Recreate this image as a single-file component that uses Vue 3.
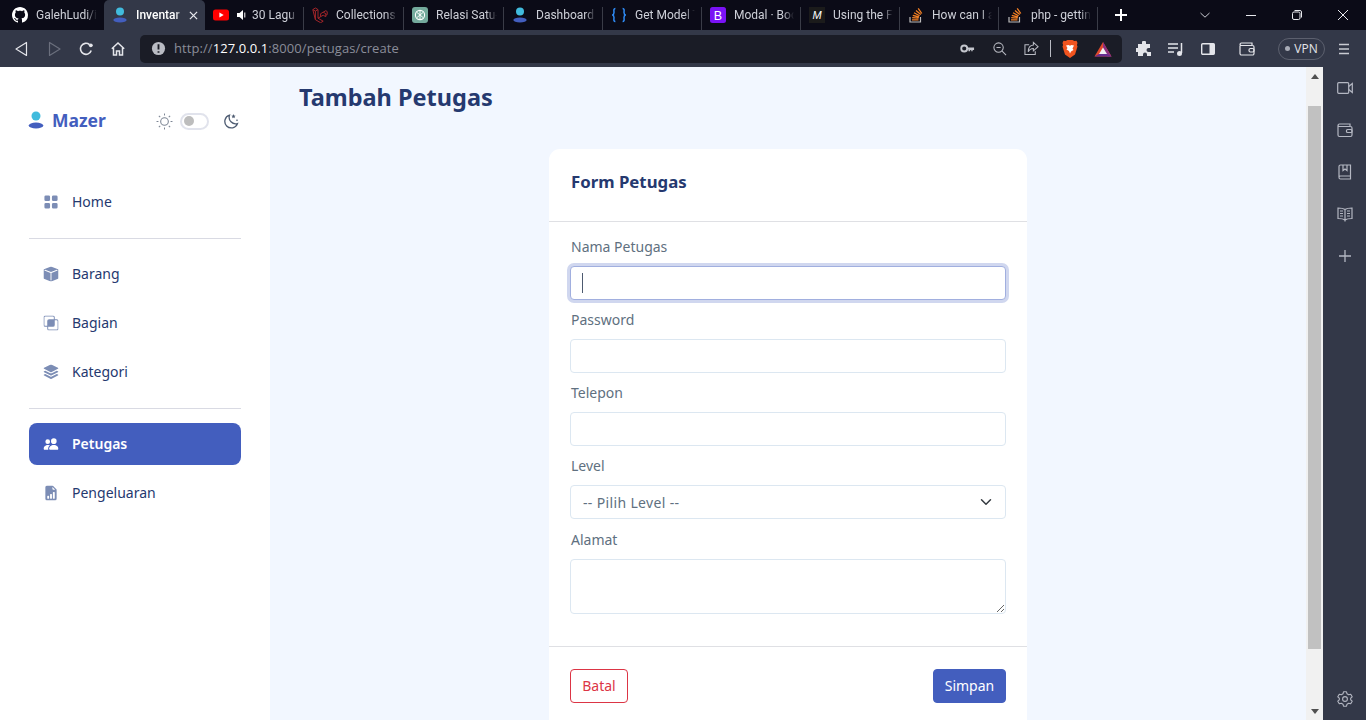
<script setup>
const tabs = [
  { t: 'GalehLudi/in', i: 'gh' },
  { t: 'Inventar', i: 'mazer', active: true },
  { t: '30 Lagu', i: 'yt', audio: true },
  { t: 'Collections -', i: 'lara' },
  { t: 'Relasi Satu-l', i: 'gpt' },
  { t: 'Dashboard -', i: 'mazer' },
  { t: 'Get Model T', i: 'json' },
  { t: 'Modal · Boo', i: 'bs' },
  { t: 'Using the Fe', i: 'mdn' },
  { t: 'How can I a', i: 'so' },
  { t: 'php - gettin', i: 'so' },
]
const menu = [
  [{ t: 'Home', d: ['M1 2.5A1.5 1.5 0 0 1 2.5 1h3A1.5 1.5 0 0 1 7 2.5v3A1.5 1.5 0 0 1 5.5 7h-3A1.5 1.5 0 0 1 1 5.5v-3zm8 0A1.5 1.5 0 0 1 10.5 1h3A1.5 1.5 0 0 1 15 2.5v3A1.5 1.5 0 0 1 13.5 7h-3A1.5 1.5 0 0 1 9 5.5v-3zm-8 8A1.5 1.5 0 0 1 2.5 9h3A1.5 1.5 0 0 1 7 10.5v3A1.5 1.5 0 0 1 5.5 15h-3A1.5 1.5 0 0 1 1 13.5v-3zm8 0A1.5 1.5 0 0 1 10.5 9h3a1.5 1.5 0 0 1 1.5 1.5v3a1.5 1.5 0 0 1-1.5 1.5h-3A1.5 1.5 0 0 1 9 13.5v-3z'] }],
  [
    { t: 'Barang', d: ['M15.528 2.973a.75.75 0 0 1 .472.696v8.662a.75.75 0 0 1-.472.696l-7.25 2.9a.75.75 0 0 1-.557 0l-7.25-2.9A.75.75 0 0 1 0 12.331V3.669a.75.75 0 0 1 .471-.696L7.443.184l.004-.001.274-.11a.75.75 0 0 1 .558 0l.274.11.004.001 6.971 2.789Zm-1.374.527L8 5.962 1.846 3.5 1 3.839v.4l6.5 2.6v7.922l.5.2.5-.2V6.84l6.5-2.6v-.4l-.846-.339Z'] },
    { t: 'Bagian', d: ['M0 2a2 2 0 0 1 2-2h8a2 2 0 0 1 2 2v2h2a2 2 0 0 1 2 2v8a2 2 0 0 1-2 2H6a2 2 0 0 1-2-2v-2H2a2 2 0 0 1-2-2V2zm5 10v2a1 1 0 0 0 1 1h8a1 1 0 0 0 1-1V6a1 1 0 0 0-1-1h-2v5a2 2 0 0 1-2 2H5zm6-8V2a1 1 0 0 0-1-1H2a1 1 0 0 0-1 1v8a1 1 0 0 0 1 1h2V6a2 2 0 0 1 2-2h5z'] },
    { t: 'Kategori', d: ['m14.12 10.163 1.715.858c.22.11.22.424 0 .534L8.267 15.34a.598.598 0 0 1-.534 0L.165 11.555a.299.299 0 0 1 0-.534l1.716-.858 5.317 2.659c.505.252 1.1.252 1.604 0l5.317-2.66zM7.733.063a.598.598 0 0 1 .534 0l7.568 3.784a.3.3 0 0 1 0 .535L8.267 8.165a.598.598 0 0 1-.534 0L.165 4.382a.299.299 0 0 1 0-.535L7.733.063z', 'm14.12 6.576 1.715.858c.22.11.22.424 0 .534l-7.568 3.784a.598.598 0 0 1-.534 0L.165 7.968a.299.299 0 0 1 0-.534l1.716-.858 5.317 2.659c.505.252 1.1.252 1.604 0l5.317-2.659z'] },
  ],
  [
    { t: 'Petugas', active: true, d: ['M7 14s-1 0-1-1 1-4 5-4 5 3 5 4-1 1-1 1H7Zm4-6a3 3 0 1 0 0-6 3 3 0 0 0 0 6Zm-5.784 6A2.238 2.238 0 0 1 5 13c0-1.355.68-2.75 1.936-3.72A6.325 6.325 0 0 0 5 9c-4 0-5 3-5 4s1 1 1 1h4.216ZM4.5 8a2.5 2.5 0 1 0 0-5 2.5 2.5 0 0 0 0 5Z'] },
    { t: 'Pengeluaran', d: ['M9.293 0H4a2 2 0 0 0-2 2v12a2 2 0 0 0 2 2h8a2 2 0 0 0 2-2V4.707A1 1 0 0 0 13.707 4L10 .293A1 1 0 0 0 9.293 0zM9.5 3.5v-2l3 3h-2a1 1 0 0 1-1-1zm.5 10v-6a.5.5 0 0 1 .5-.5h1a.5.5 0 0 1 .5.5v6a.5.5 0 0 1-.5.5h-1a.5.5 0 0 1-.5-.5zm-2.5.5a.5.5 0 0 1-.5-.5v-4a.5.5 0 0 1 .5-.5h1a.5.5 0 0 1 .5.5v4a.5.5 0 0 1-.5.5h-1zm-3 0a.5.5 0 0 1-.5-.5v-2a.5.5 0 0 1 .5-.5h1a.5.5 0 0 1 .5.5v2a.5.5 0 0 1-.5.5h-1z'] },
  ],
]
const sun = [0, 45, 90, 135, 180, 225, 270, 315]
</script>

<template>
  <div class="browser">
    <div class="tabstrip">
      <div v-for="(tab, n) in tabs" :key="n" class="tab" :class="{ on: tab.active }">
        <svg class="fav" viewBox="0 0 16 16">
          <template v-if="tab.i === 'gh'">
            <path fill="#fff" d="M8 0C3.58 0 0 3.58 0 8c0 3.54 2.29 6.53 5.47 7.59.4.07.55-.17.55-.38 0-.19-.01-.82-.01-1.49-2.01.37-2.53-.49-2.69-.94-.09-.23-.48-.94-.82-1.13-.28-.15-.68-.52-.01-.53.63-.01 1.08.58 1.23.82.72 1.21 1.87.87 2.33.66.07-.52.28-.87.51-1.07-1.78-.2-3.64-.89-3.64-3.95 0-.87.31-1.59.82-2.15-.08-.2-.36-1.02.08-2.12 0 0 .67-.21 2.2.82.64-.18 1.32-.27 2-.27s1.36.09 2 .27c1.53-1.04 2.2-.82 2.2-.82.44 1.1.16 1.92.08 2.12.51.56.82 1.27.82 2.15 0 3.07-1.87 3.75-3.65 3.95.29.25.54.73.54 1.48 0 1.07-.01 1.93-.01 2.2 0 .21.15.46.55.38A8.01 8.01 0 0 0 16 8c0-4.42-3.58-8-8-8Z"/>
          </template>
          <template v-else-if="tab.i === 'mazer'">
            <circle cx="8" cy="4.5" r="4" fill="#41bbdd"/>
            <ellipse cx="8" cy="13" rx="6.6" ry="2.6" fill="#435ebe"/>
          </template>
          <template v-else-if="tab.i === 'yt'">
            <rect y="2.500" width="16" height="11" rx="2.500" fill="#f00"/>
            <path d="M6.400 5.500v5l4.300-2.500z" fill="#fff"/>
          </template>
          <template v-else-if="tab.i === 'lara'">
            <path fill="none" stroke="#a3262a" stroke-width="1" d="M.8 2.600 3.400 1 6 2.600v8.600l5.200 3-2.600 1.500-5.200-3zM6 11.200l5.200-3 2.600 1.500v-3l-2.600-1.500-2.600 1.500v3M11.200 5.200l2.600-1.500 1.400.9v3l-1.400.6M.8 2.600l2.600 1.500L6 2.600M3.400 4.100v8.600"/>
          </template>
          <template v-else-if="tab.i === 'gpt'">
            <rect width="16" height="16" rx="3" fill="#74aa9c"/>
            <circle cx="8" cy="8" r="4.600" fill="none" stroke="#fff" stroke-width="1.100"/>
            <path d="M5 5.500 11 10.500M11 5.500 5 10.500M8 3.400v9.200" stroke="#fff" stroke-width=".9"/>
          </template>
          <template v-else-if="tab.i === 'json'">
            <path fill="none" stroke="#2f8bf5" stroke-width="1.500" d="M4.400 1.500c-2.200 0-1.400 2.600-1.400 4 0 1.300-.5 2.200-1.700 2.500 1.200.3 1.700 1.200 1.700 2.500 0 1.400-.8 4 1.400 4M11.600 1.500c2.200 0 1.400 2.600 1.400 4 0 1.300.5 2.200 1.700 2.500-1.200.3-1.700 1.200-1.700 2.500 0 1.400.8 4-1.400 4"/>
          </template>
          <template v-else-if="tab.i === 'bs'">
            <rect width="16" height="16" rx="2.500" fill="#7a12f5"/>
            <text x="8" y="12.600" text-anchor="middle" font-size="12.500" font-weight="400" font-family="'Liberation Sans', sans-serif" fill="#fff">B</text>
          </template>
          <template v-else-if="tab.i === 'mdn'">
            <rect width="16" height="16" fill="#1b1b1b"/>
            <text x="8" y="12" text-anchor="middle" font-size="11" font-style="italic" font-weight="400" font-family="'Liberation Sans', sans-serif" fill="#fff">M</text>
          </template>
          <template v-else>
            <path d="M2 10v5h10.500v-5" fill="none" stroke="#bcbbbb" stroke-width="1.200"/>
            <path d="M4 12.800h6.500M4.200 10.600l6.400.6M4.800 8.300l6.200 1.700M6 5.800l5.600 3M8 3.500l4.800 4.100M10.200 1.300l3.600 5.200" stroke="#f48024" stroke-width="1.300" fill="none"/>
          </template>
        </svg>
        <svg v-if="tab.audio" class="speaker" viewBox="0 0 12 12">
          <path fill="#fff" d="M0 4h2.500L6 1v10L2.500 8H0z"/><path fill="none" stroke="#fff" d="M7.800 3.500v5"/>
        </svg>
        <span class="tab-title">{{ tab.t }}</span>
        <svg v-if="tab.active" class="tab-x" viewBox="0 0 10 10">
          <path d="M1 1l8 8M9 1l-8 8" stroke="#e8e9ee" stroke-width="1.400"/>
        </svg>
      </div>
      <svg class="new-tab" viewBox="0 0 12 12"><path d="M6 0v12M0 6h12" stroke="#fff" stroke-width="2"/></svg>
      <div class="win-controls">
        <svg viewBox="0 0 12 12"><path d="M1.500 4 6 8.200 10.500 4" fill="none" stroke="#c9cbd2"/></svg>
        <svg viewBox="0 0 12 12"><path d="M1 6.500h10" stroke="#e8e9ee"/></svg>
        <svg viewBox="0 0 12 12"><rect x="1.500" y="3" width="7.500" height="7.500" rx="1.500" fill="none" stroke="#e8e9ee"/><path d="M3.500 1.500h5.500a1.500 1.500 0 0 1 1.500 1.500v5.500" fill="none" stroke="#e8e9ee"/></svg>
        <svg viewBox="0 0 12 12"><path d="M1 1l10 10M11 1 1 11" stroke="#e8e9ee"/></svg>
      </div>
    </div>

    <div class="toolbar">
      <button class="tb"><svg viewBox="0 0 16 16"><path d="M12.500 1.500v13L2 8z" fill="none" stroke="#e4e5ea" stroke-width="1.200" stroke-linejoin="round"/></svg></button>
      <button class="tb"><svg viewBox="0 0 16 16"><path d="M3.500 1.500v13L14 8z" fill="none" stroke="#6b6f7d" stroke-width="1.200" stroke-linejoin="round"/></svg></button>
      <button class="tb"><svg viewBox="0 0 16 16"><path d="M13.200 9.500A5.500 5.500 0 1 1 11.500 3.600" fill="none" stroke="#e4e5ea" stroke-width="1.600"/><circle cx="12.800" cy="4.300" r="1.900" fill="#e4e5ea"/></svg></button>
      <button class="tb"><svg viewBox="0 0 16 16"><path d="M1.800 7.800 8 2l6.200 5.800M3.500 6.800V14h3v-4h3v4h3V6.800" fill="none" stroke="#e4e5ea" stroke-width="1.500"/></svg></button>
      <div class="urlbar">
        <svg class="info" viewBox="0 0 16 16"><circle cx="8" cy="8" r="7" fill="#b9bbc3"/><path d="M8 3.500v5.500M8 10.800v1.700" stroke="#1a1c26" stroke-width="2"/></svg>
        <span class="url">http://<b>127.0.0.1</b>:8000/petugas/create</span>
        <div class="url-actions">
          <svg viewBox="0 0 16 16"><circle cx="4.500" cy="8" r="3.200" fill="none" stroke="#c4c6cd" stroke-width="2"/><path d="M7.500 7h7.500v2.500h-1.500V11h-1.500V9.500h-1.200V11H9V9H7.500z" fill="#c4c6cd"/></svg>
          <svg viewBox="0 0 16 16"><circle cx="7" cy="7" r="5" fill="none" stroke="#b9bbc3" stroke-width="1.100"/><path d="M4.800 7h4.400M10.800 10.800 15 15" stroke="#b9bbc3" stroke-width="1.100"/></svg>
          <svg viewBox="0 0 16 16"><path d="M5.500 4H1v10.500h11V11" fill="none" stroke="#b9bbc3" stroke-width="1.100"/><path d="M10 1.500 15 6l-5 4.500V8C7 8 5.500 9.500 4.500 11.500 4.500 7.500 6.500 4.500 10 4.200z" fill="none" stroke="#b9bbc3" stroke-width="1.100"/></svg>
          <i class="url-div"></i>
          <svg class="brave" viewBox="0 0 16 18"><path d="M3.600 1 5.500 0h5l1.900 1 2.100-.2 1 2.100-.6 2.100.6 1.500-2.500 8L8 18l-5-3.500-2.500-8 .6-1.500L.5 2.900l1-2.100z" fill="#f1541f"/><path d="M4 5.500 6.500 5 8 5.800 9.500 5l2.500.5-1.500 3 1 1.500-2.500 1.500L8 13.500l-1-2.500L4.500 9.500l1-1.500z" fill="#fff"/></svg>
          <svg class="bat" viewBox="0 0 18 16"><path d="M9 1 17.500 15.500H.5z" fill="#e0492c"/><path d="M9 1 17.500 15.500H13L9 7z" fill="#8a2f7e"/><path d="M9 6.500 13 13H5z" fill="#f1f0f5"/><path d="M.5 15.500 5 13H13L17.500 15.500z" fill="#662d91"/></svg>
        </div>
      </div>
      <div class="tool-right">
        <svg class="r1" viewBox="0 0 16 16"><path fill="#e4e5ea" d="M6 1.500a2 2 0 0 1 4 0V3h4v4h-1.500a2 2 0 0 0 0 4H15v4h-4v-1.500a2 2 0 0 0-4 0V15H2v-4H.8a2 2 0 0 1 0-4H2V3h4z"/></svg>
        <svg class="r2" viewBox="0 0 16 16"><path d="M0 3h10M0 7h10M0 11h6" stroke="#e4e5ea" stroke-width="1.400"/><path d="M13.500 2v10" stroke="#e4e5ea" stroke-width="1.500"/><circle cx="11.500" cy="12.500" r="2.500" fill="#e4e5ea"/></svg>
        <svg class="r3" viewBox="0 0 16 16"><rect x="1.700" y="2.700" width="12.600" height="10.600" rx="1" fill="none" stroke="#e4e5ea" stroke-width="1.400"/><path d="M9.500 2.700h4.800v10.600H9.500z" fill="#e4e5ea"/></svg>
        <svg class="r4" viewBox="0 0 16 16"><path d="M1 4.500V12.500a1.500 1.500 0 0 0 1.500 1.500h11a1.500 1.500 0 0 0 1.500-1.500V6a1.500 1.500 0 0 0-1.500-1.500H2.500A1.500 1.500 0 0 1 1 3.500 1.500 1.500 0 0 1 2.500 2H13v2.500" fill="none" stroke="#e4e5ea" stroke-width="1.200"/><rect x="10" y="7.500" width="5" height="3.500" rx="1.500" fill="none" stroke="#e4e5ea" stroke-width="1.200"/></svg>
        <div class="vpn"><i></i>VPN</div>
        <svg class="r5" viewBox="0 0 12 12"><path d="M1 1.500h10M1 6h10M1 10.500h10" stroke="#c9cbd2" stroke-width="1.500"/></svg>
      </div>
    </div>

    <div class="viewport">
      <aside class="sidebar">
        <div class="brand-row">
          <div class="brand">
            <svg viewBox="0 0 16 18"><circle cx="8" cy="5" r="4.500" fill="#41bbdd"/><ellipse cx="8" cy="14.500" rx="7.300" ry="3" fill="#435ebe"/></svg>
            <span>Mazer</span>
          </div>
          <div class="theme">
            <svg class="sun" viewBox="0 0 16 16">
              <circle cx="8" cy="8" r="3.600" fill="none" stroke="#7c8594" stroke-width="1"/>
              <path v-for="a in sun" :key="a" d="M8 .5v1.800" stroke="#7c8594" stroke-width="1" :transform="`rotate(${a} 8 8)`"/>
            </svg>
            <div class="switch"><i></i></div>
            <svg class="moon" viewBox="0 0 16 16">
              <path d="M6.500 2.200A6.500 6.500 0 1 0 14.500 10.500 6.500 6.500 0 0 1 6.500 2.200z" fill="none" stroke="#4f5d73" stroke-width="1.300"/>
              <path d="M10.500 1l.6 1.500 1.500.2-1.100 1 .3 1.500-1.300-.8-1.300.8.3-1.500-1.100-1 1.500-.2zM14 6l.3.800.8.1-.6.500.2.800-.7-.4-.7.4.2-.8-.6-.5.8-.1z" fill="#4f5d73"/>
            </svg>
          </div>
        </div>
        <nav class="menu">
          <template v-for="(group, g) in menu" :key="g">
            <hr v-if="g > 0" class="rule" />
            <ul>
              <li v-for="item in group" :key="item.t" class="item" :class="{ on: item.active }">
                <svg viewBox="0 0 16 16"><path v-for="(p, k) in item.d" :key="k" :d="p"/></svg>
                <span>{{ item.t }}</span>
              </li>
            </ul>
          </template>
        </nav>
      </aside>

      <main class="main">
        <h1>Tambah Petugas</h1>
        <section class="card">
          <header class="card-head"><h2>Form Petugas</h2></header>
          <form class="card-body">
            <label>Nama Petugas</label>
            <div class="field focus-wrap">
              <input class="ctl focused" type="text" />
              <i class="caret"></i>
            </div>
            <label>Password</label>
            <div class="field"><input class="ctl" type="password" /></div>
            <label>Telepon</label>
            <div class="field"><input class="ctl" type="text" /></div>
            <label>Level</label>
            <div class="field select-wrap">
              <select class="ctl select"><option>-- Pilih Level --</option></select>
              <svg class="chev" viewBox="0 0 16 16"><path d="M2 5l6 6 6-6" fill="none" stroke="#343a40" stroke-width="2" stroke-linecap="round" stroke-linejoin="round"/></svg>
            </div>
            <label class="l-last">Alamat</label>
            <div class="field"><textarea class="ctl area"></textarea></div>
          </form>
          <footer class="card-foot">
            <button class="btn outline" type="button">Batal</button>
            <button class="btn solid" type="button">Simpan</button>
          </footer>
        </section>
      </main>

      <div class="scrollbar">
        <i class="arrow up"></i>
        <div class="track"><div class="thumb"></div></div>
        <i class="arrow down"></i>
      </div>

      <div class="rail">
        <svg viewBox="0 0 16 16"><rect x=".7" y="2.700" width="11" height="10.600" rx="1" fill="none" stroke="#b4b7c2" stroke-width="1.200"/><path d="M11.700 6.500 15.300 3.500v9l-3.600-3" fill="none" stroke="#b4b7c2" stroke-width="1.200"/></svg>
        <svg viewBox="0 0 16 16"><path d="M1 3.500v9.500a1.500 1.500 0 0 0 1.500 1.500h11A1.500 1.500 0 0 0 15 13V6a1.500 1.500 0 0 0-1.500-1.500h-11A1.500 1.500 0 0 1 1 3.500 1.500 1.500 0 0 1 2.500 2H13v2.500" fill="none" stroke="#b4b7c2" stroke-width="1.200"/><rect x="9.500" y="7.500" width="5.500" height="3" rx="1" fill="none" stroke="#b4b7c2" stroke-width="1.200"/></svg>
        <svg viewBox="0 0 16 16"><path d="M2 13V2.500A1.500 1.500 0 0 1 3.500 1h10v11H3.500A1.500 1.500 0 0 0 2 13.500 1.500 1.500 0 0 0 3.500 15h10v-3" fill="none" stroke="#b4b7c2" stroke-width="1.200"/><path d="M6 1v5.500l2-1.500 2 1.500V1" fill="none" stroke="#b4b7c2" stroke-width="1.200"/></svg>
        <svg viewBox="0 0 16 16"><path d="M8 3.500C6 2 3.500 2 1 2v10.500c2.500 0 5 0 7 1.500 2-1.500 4.500-1.500 7-1.500V2c-2.500 0-5 0-7 1.500zM8 3.500V15.500M3 5h3M3 7.500h3M3 10h3M10 5h3M10 7.500h3M10 10h3" fill="none" stroke="#b4b7c2" stroke-width="1.200"/></svg>
        <svg viewBox="0 0 16 16"><path d="M8 2v12M2 8h12" stroke="#b4b7c2" stroke-width="1.300"/></svg>
        <svg class="gear" viewBox="0 0 16 16"><path d="M6.500.8h3l.5 2 1.700 1 2-.6 1.500 2.600-1.500 1.400v1.600l1.500 1.400-1.500 2.600-2-.6-1.700 1-.5 2h-3l-.5-2-1.700-1-2 .6L.8 10.200l1.500-1.400V7.200L.8 5.800l1.500-2.600 2 .6 1.700-1z" fill="none" stroke="#b4b7c2" stroke-width="1.100" stroke-linejoin="round"/><circle cx="8" cy="8" r="2.400" fill="none" stroke="#b4b7c2" stroke-width="1.100"/></svg>
      </div>
    </div>
  </div>
</template>

<style>
html, body { margin: 0; overflow: hidden; }
</style>

<style scoped>
* { box-sizing: border-box; }
.browser { width: 1366px; height: 720px; display: flex; flex-direction: column; overflow: hidden; background: #0b0b17; font-family: "Open Sans", sans-serif; }

.tabstrip { height: 30px; flex: none; display: flex; align-items: stretch; padding-left: 4px; background: #0b0b17; }
.tab { width: 99px; flex: none; display: flex; align-items: center; padding: 0 7px 0 8px; color: #ced0d8; font-family: Roboto, sans-serif; font-size: 12px; position: relative; }
.tab:nth-child(-n+5) { width: 100px; }
.tab::after { content: ""; position: absolute; right: 0; top: 7px; bottom: 0; width: 1px; background: #3a3c47; }
.tab.on { background: #333848; border-radius: 5px 5px 0 0; color: #fff; font-weight: 500; width: 101px; }
.tab.on + .tab { width: 99px; }
.tab.on::after, .tab:first-child::after { background: transparent; }
.fav { width: 16px; height: 16px; flex: none; margin-right: 8px; }
.speaker { width: 12px; height: 12px; flex: none; margin-right: 3px; }
.tab-title { flex: 1; min-width: 0; white-space: nowrap; padding-bottom: 1px; -webkit-mask-image: linear-gradient(to right, #000 82%, transparent 100%); mask-image: linear-gradient(to right, #000 82%, transparent 100%); }
.tab-x { width: 9px; height: 9px; flex: none; margin-left: 5px; }
.new-tab { width: 12px; height: 12px; flex: none; align-self: center; margin-left: 17px; }
.win-controls { margin-left: auto; display: flex; align-items: center; }
.win-controls svg { width: 12px; height: 12px; flex: none; margin-right: 34px; }
.win-controls svg:last-child { margin-right: 17px; }

.toolbar { height: 37px; flex: none; display: flex; align-items: center; padding-left: 6px; background: #333848; }
.tb { width: 32px; height: 28px; flex: none; border: 0; padding: 0; background: none; display: flex; align-items: center; justify-content: center; }
.tb svg { width: 16px; height: 16px; }
.urlbar { width: 982px; height: 28px; margin-left: 6px; flex: none; border-radius: 5px; background: #1a1c26; display: flex; align-items: center; padding-left: 11px; }
.info { width: 15px; height: 15px; flex: none; }
.url { margin-left: 8px; padding-bottom: 2px; font-size: 13px; letter-spacing: .08px; color: #8a8d99; white-space: nowrap; }
.url b { color: #fff; font-weight: 400; }
.url-actions { margin-left: auto; display: flex; align-items: center; padding-right: 10px; }
.url-actions svg { width: 15px; height: 15px; flex: none; margin-right: 17px; }
.url-actions .brave { width: 16px; height: 18px; margin-right: 16px; }
.url-actions .bat { width: 18px; height: 16px; margin-right: 0; }
.url-div { width: 1px; height: 17px; background: #b9bbc3; margin-right: 11px; margin-left: -6px; }
.tool-right { flex: 1; display: flex; align-items: center; padding-left: 14px; }
.tool-right svg { flex: none; width: 16px; height: 16px; }
.r1, .r2 { margin-right: 16px; }
.r3 { margin-right: 23px; }
.r4 { margin-right: 23px; }
.vpn { width: 47px; height: 22px; border: 1px solid #5c606e; border-radius: 11px; display: flex; align-items: center; justify-content: center; gap: 4px; color: #e4e5ea; font-size: 12px; flex: none; }
.vpn i { width: 5px; height: 5px; border-radius: 50%; background: #a8abb6; }
.tool-right .r5 { width: 12px; height: 12px; margin-left: 13px; }

.viewport { flex: 1; min-height: 0; display: flex; font-family: "Noto Sans", sans-serif; }
.sidebar { width: 270px; flex: none; background: #fff; padding: 0 29px; }
.brand-row { height: 114px; display: flex; align-items: center; justify-content: space-between; padding-bottom: 9px; }
.brand { display: flex; align-items: center; gap: 8px; color: #435ebe; font-size: 17.500px; font-weight: 700; margin-left: -1px; }
.brand svg { width: 16px; height: 18px; }
.theme { display: flex; align-items: center; padding-top: 3px; margin-right: 2px; }
.sun { width: 17px; height: 17px; margin-right: 7px; }
.moon { width: 16px; height: 16px; margin-left: 14px; }
.switch { width: 29px; height: 17px; border: 2px solid #e1e3ec; border-radius: 9px; background: #fff; padding: 1.500px 2px; }
.switch i { display: block; width: 10px; height: 10px; border-radius: 50%; background: #bdbdbd; }
.menu ul { list-style: none; margin: 0; padding: 0; display: flex; flex-direction: column; gap: 7px; }
.rule { border: 0; height: 1px; background: #d9dae3; margin: 15px 0 14px; }
.item { height: 42px; display: flex; align-items: center; padding-left: 14px; border-radius: 8px; color: #25396f; font-size: 14px; font-weight: 400; }
.item span { padding-bottom: 1px; }
.item svg { width: 16px; height: 16px; flex: none; fill: #7c8db5; margin-right: 13px; transform: scale(.94); }
.item.on { background: #435ebe; color: #fff; font-weight: 600; }
.item.on svg { fill: #fff; }

.main { flex: 1; min-width: 0; background: #f2f7ff; overflow: hidden; padding: 0 29px; }
h1 { margin: 0; font-size: 23.500px; font-weight: 700; color: #25396f; line-height: 30px; padding-top: 15px; height: 82px; }
.card { width: 478px; margin: 0 auto; background: #fff; border-radius: 11px 11px 0 0; }
.card-head { height: 73px; border-bottom: 1px solid #dfe0e4; padding: 21px 22px 0; }
h2 { margin: 0; font-size: 16.800px; line-height: 23px; font-weight: 700; color: #25396f; }
.card-body { padding: 13px 21px 32px; display: flex; flex-direction: column; }
label { display: block; height: 24px; line-height: 24px; margin-bottom: 7px; padding-left: 1px; font-size: 14px; color: #607080; }
.l-last { margin-bottom: 7px; margin-top: 1px; }
.field { position: relative; height: 34px; margin-bottom: 8px; }
.field:has(.area) { height: 55px; margin-bottom: 0; }
.ctl { display: block; width: 100%; height: 100%; border: 1px solid #dce7f1; border-radius: 4px; padding: 0 12px; background: #fff; font: 14px "Noto Sans", sans-serif; color: #607080; outline: none; appearance: none; }
.select { letter-spacing: .35px; }
.area { resize: vertical; padding: 6px 12px; }
.focused { border-color: #a1afdf; box-shadow: 0 0 0 3px #d0d7ef; }
.caret { position: absolute; left: 12px; top: 7px; width: 1px; height: 20px; background: #4d5a70; }
.chev { position: absolute; right: 14px; top: 11px; width: 12px; height: 12px; pointer-events: none; }
.card-foot { border-top: 1px solid #dfe0e4; padding: 22px 21px 30px; display: flex; justify-content: space-between; }
.btn { height: 34px; border-radius: 4px; font: 14px "Noto Sans", sans-serif; padding: 0 0 1px; }
.outline { width: 58px; border: 1px solid #dc3545; background: #fff; color: #dc3545; }
.solid { width: 73px; border: 1px solid #435ebe; background: #435ebe; color: #fff; }

.scrollbar { width: 17px; flex: none; background: #f1f1f1; display: flex; flex-direction: column; align-items: center; }
.track { flex: 1; width: 100%; padding: 27px 2px 60px; }
.thumb { height: 100%; background: #c1c1c1; }
.arrow { width: 0; height: 0; flex: none; border-left: 4px solid transparent; border-right: 4px solid transparent; margin-top: 7px; }
.up { border-bottom: 5px solid #505050; }
.down { border-top: 5px solid #505050; margin: 0 0 6px; }

.rail { width: 43px; flex: none; background: #333848; display: flex; flex-direction: column; align-items: center; padding-top: 13px; }
.rail svg { width: 16px; height: 16px; flex: none; margin-bottom: 26px; }
.rail .gear { margin-top: auto; margin-bottom: 13px; }
</style>
